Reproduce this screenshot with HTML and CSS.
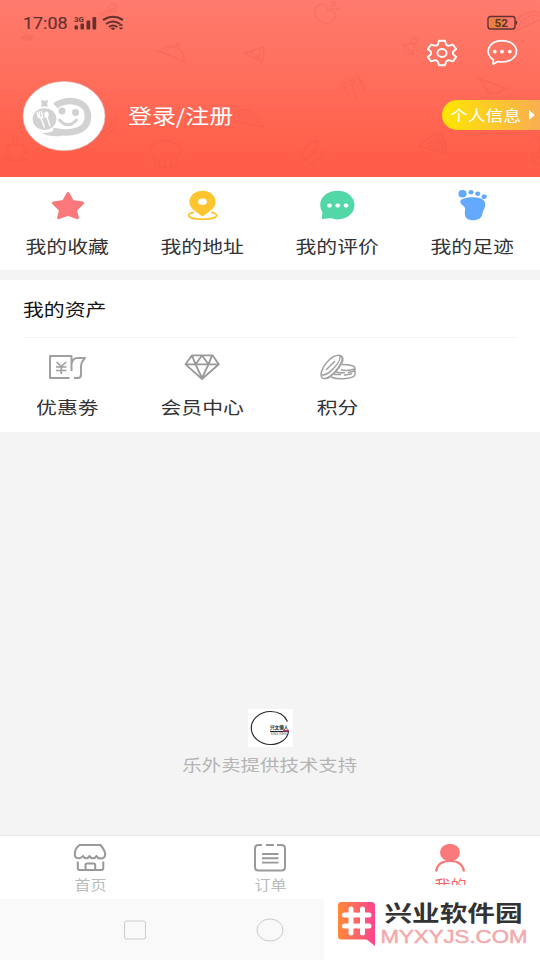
FILE: index.html
```html
<!DOCTYPE html>
<html lang="zh-CN">
<head>
<meta charset="utf-8">
<title>我的</title>
<link rel="stylesheet" href="styles.css">
</head>
<body>
<div class="app">
  <header class="header">
    <svg class="doodles" viewBox="0 0 540 177" fill="none" stroke="#d94f49" stroke-width="1.4" stroke-linecap="round" stroke-linejoin="round">
      <path d="M99 14l16-6-8 7zM108 8c2-6 9-4 9 0s-5 6-8 3"/>
      <path fill="#d94f49" d="M21 37c6 0 9-3 12-1-1 5-7 6-12 1zM23 32l4 4"/>
      <path d="M156 50l30 12M161 51c5-9 22-5 23 8M165 52c3-5 8-5 11-4"/><circle cx="178" cy="45" r="1.5"/>
      <path d="M244 53l19-6q2 8-1 15zM260 48q-1 7-1 11"/><circle cx="252" cy="53" r="1"/><circle cx="256" cy="57" r="1"/>
      <path d="M233 118c2-12 26-11 30 9l-31-6M237 117c5-7 17-4 21 6M242 116v2M248 116v2M253 120v2"/>
      <path d="M116 116c2 9-4 18-18 24M112 117q1 12-16 18M103 130v1M107 125v1"/>
      <path d="M154 156c-7-4-5-12 2-12 3-5 14-5 17 0 10-1 10 9 4 12v10q-12 3-23 0zM159 160v6M165 160v6M171 160v6"/>
      <path d="M8 145h16v8q-1 5-5 5h-6q-5 0-5-5zM24 147c4 0 4 7-1 7M4 159q12 4 23 0M14 142q-3-3 0-6M18 142q-2-3 0-5"/>
      <path d="M326 5c-6-3-11 1-11 7 0 7 5 11 11 11 8 0 13-8 7-12-3-2-6 2-6-1zM331 6c0-6 5-5 5-1zM327 9q6 0 13 0"/>
      <path d="M403 45l12-2-2 10zM413 53l-2 2M408 54h6"/><circle cx="414" cy="41" r="3"/>
      <path d="M345 88l5 9M352 86l4 12M358 77q6 5 7 14M357 77l5 9"/><ellipse cx="344" cy="85" rx="2.5" ry="3"/><path d="M349 80q1 8 4 6 2-2 1-7M352 79v4"/>
      <path d="M477 78l31 11M481 80c2 11 16 19 23 8M486 93l4 1M484 87q5 5 11 6"/>
      <path d="M513 32c0-12 10-22 27-20M513 32l26-12M518 29c2-9 10-14 20-14M523 23v1M528 20v1M533 19v1M526 26v1"/>
      <path d="M419 146l18-14q10 5 9 22zM435 133q8 6 8 20"/><circle cx="431" cy="144" r="2"/><circle cx="438" cy="141" r="2"/><circle cx="437" cy="149" r="2"/>
      <path d="M301 154l8-10 7-4 1 5-3 7-8 9zM312 152q7 3 12 0-2 8-8 7l-4 6M309 163l6 3"/>
      <circle cx="538" cy="158" r="6"/><path d="M534 138q3-2 6-1v18M532 158h8M538 153v10"/>
    </svg>
    <div class="status">
      <svg class="status-left" width="104" height="24" viewBox="0 0 104 24" fill="#64312f">
        <text x="0" y="17" class="clock" textLength="44.5" lengthAdjust="spacingAndGlyphs">17:08</text>
        <text x="51" y="9.5" class="network" textLength="10" lengthAdjust="spacingAndGlyphs">3G</text>
        <rect x="51.5" y="13.5" width="3.5" height="4" rx="1"/><rect x="57.5" y="11.5" width="3.5" height="6" rx="1"/><rect x="63.5" y="8.5" width="3.7" height="9" rx="1"/><rect x="69.5" y="5" width="3.7" height="12.500" rx="1"/>
        <g fill="none" stroke="#64312f" stroke-width="2.1"><path d="M80 8q10-6.500 20 0"/><path d="M83 12q7-5 14 0"/><path d="M86 15q4-3 8.500 0"/></g>
        <path d="M87.500 16.200q2.500-1.500 5 0l-2.500 2zM95.500 13.700l2.500-2.200 2.500 2.200zM95.500 15.500h5l-2.500 2.300z"/>
      </svg>
      <svg class="battery" width="32" height="16" viewBox="0 0 32 16">
        <rect x="4" y="3" width="14" height="10" fill="#e97e40"/>
        <rect x="2" y="1.500" width="27" height="12.500" rx="2.500" fill="none" stroke="#64312f" stroke-width="1.4"/>
        <path d="M30.300 6v3.500" stroke="#64312f" stroke-width="1.600"/>
        <text x="8.500" y="11.700" class="charge" textLength="13.500" lengthAdjust="spacingAndGlyphs">52</text>
      </svg>
    </div>
    <div class="actions">
      <svg width="32" height="28" viewBox="0 0 32 28" fill="none" stroke="#fff" stroke-width="1.900" stroke-linejoin="round">
        <path d="M13 1.800h6l1.200 4 2.300 1.100 4.500-1.200 3.200 4.400-3.200 2.700v2.500l3.200 2.600-3.200 4.500-4.500-1.200-2.300 1.100-1.200 4h-6l-1.200-4-2.300-1.100L5 22.400l-3.200-4.500L5 15.300v-2.500l-3.200-2.700L5 5.700l4.500 1.200 2.300-1.100z"/>
        <ellipse cx="16" cy="14" rx="4.600" ry="4"/>
      </svg>
      <svg width="32" height="28" viewBox="0 0 32 28" fill="none" stroke="#fff" stroke-width="1.700" stroke-linejoin="round">
        <path d="M7.300 20.700C-2 14.500 2 1.600 16 1.600c8 0 14.500 4.500 14.500 10.600S24 23 16 23c-2 0-3-.2-4.300-.5l-4.700 2.700z"/>
        <g fill="#fff" stroke="none"><circle cx="8.700" cy="12.600" r="1.900"/><circle cx="16" cy="12.600" r="1.900"/><circle cx="23.800" cy="12.600" r="1.900"/></g>
      </svg>
    </div>
    <div class="profile">
      <svg class="avatar" width="84" height="72" viewBox="0 0 84 72">
        <ellipse cx="42" cy="36" rx="41" ry="34.600" fill="#fff" stroke="#d8c9c7" stroke-width=".7"/>
        <path d="M33.500 26C41 18.500 66 18 66 36.500 66 52 48 54.500 31 51" fill="none" stroke="#d2d2d2" stroke-width="6.500"/>
        <path d="M20 53q10 0 14-4l8 4-4 3q-11 1-18-3z" fill="#d2d2d2"/>
        <g fill="#d2d2d2"><ellipse cx="22.500" cy="39" rx="11.900" ry="10.800"/><ellipse cx="40" cy="31" rx="3.500" ry="3.400"/><ellipse cx="53.500" cy="32.500" rx="3.500" ry="3.400"/><path d="M19 20q3.500 1.500 7 0-1.500 3.500 0 7-3.500-1.500-7 0 1.500-3.500 0-7z"/></g>
        <path d="M37.500 40q8.500 9.500 17 0" fill="none" stroke="#d2d2d2" stroke-width="2.800" stroke-linecap="round"/>
        <path d="M15.300 32.500l1.200 5h4.200l-1.200-6M17.500 32v5M19 38l3.300 9M25 37l2.800 8.500" fill="none" stroke="#fff" stroke-width="1.400" stroke-linecap="round"/>
        <ellipse cx="24.500" cy="34.800" rx="2.200" ry="3.300" fill="#fff"/>
      </svg>
      <span class="wide login">登录/注册</span>
      <a class="info"><span class="wide info-text">个人信息</span><svg width="6" height="10" viewBox="0 0 6 10"><path d="M0 0l5.800 5L0 10z" fill="#fff"/></svg></a>
    </div>
  </header>

  <nav class="shortcuts">
    <a class="cell">
      <svg width="36" height="32" viewBox="0 0 36 32"><path d="M18 3.500l4.400 8 10.200 1.500-7.200 7.200 2 7.500-9.400-3.300-9.400 3.300 2-7.500-7.200-7.200 10.200-1.500z" fill="#fa787a" stroke="#fa787a" stroke-width="3" stroke-linejoin="round"/></svg>
      <span class="wide">我的收藏</span>
    </a>
    <a class="cell">
      <svg width="36" height="32" viewBox="0 0 36 32"><path d="M17.500.8C9.500.8 4.400 6 4.400 12c0 5.500 4 8 13.100 14.500C26.500 20 30.600 17.500 30.600 12 30.600 6 25.500.8 17.500.8z" fill="#fec52f"/><ellipse cx="17.500" cy="11.800" rx="4.400" ry="3.300" fill="#fff"/><path d="M9 22.300C4.500 23 3.600 24 3.600 25.300c0 2.300 6 4 14 4s14-1.700 14-4c0-1.300-1-2.300-5.500-3" fill="none" stroke="#fec52f" stroke-width="1.700"/></svg>
      <span class="wide">我的地址</span>
    </a>
    <a class="cell">
      <svg width="36" height="32" viewBox="0 0 36 32"><path d="M17.500.8c9.500 0 17 6 17 14.300s-7.500 14.300-17 14.300c-3 0-5.500-.8-7-1.300l-7.500 1q-1.700 0-1.200-1.500l.7-5.100Q.2 19 .2 15C.2 6.800 8 .8 17.500.8z" fill="#52d8a7"/><g fill="#fff"><ellipse cx="9.500" cy="15.600" rx="2.400" ry="2.100"/><ellipse cx="17.700" cy="15.600" rx="2.400" ry="2.100"/><ellipse cx="26" cy="15.600" rx="2.400" ry="2.100"/></g></svg>
      <span class="wide">我的评价</span>
    </a>
    <a class="cell">
      <svg width="36" height="32" viewBox="0 0 36 32" fill="#63aaff"><path d="M7 9.300c4-2.500 13-2.600 18-1 4.500 1.500 6 4 5 8.500-.8 3-2.300 4-2.700 7.500-.5 4-5 6.300-10 6-5.500-.3-7.700-3-7.500-7.500.1-3 1-4-.6-6C6 14 3.500 11.500 7 9.300z"/><ellipse cx="7.500" cy="3.700" rx="4.100" ry="3.800"/><ellipse cx="16" cy="2.300" rx="2.500" ry="2.300"/><ellipse cx="22.700" cy="3.800" rx="2.600" ry="2.200"/><ellipse cx="29.200" cy="6.700" rx="2.600" ry="2.300"/></svg>
      <span class="wide">我的足迹</span>
    </a>
  </nav>

  <section class="assets">
    <h2><span class="wide left">我的资产</span></h2>
    <div class="asset-row">
      <a class="cell">
        <svg width="38" height="30" viewBox="0 0 38 30" fill="none" stroke="#a0a0a0" stroke-width="2" stroke-linejoin="round"><path d="M20.500 26H1V4h21.500v15M22.500 12q1-6 6-6h7.500q-4 4-4 9v7.500q0 3.500-3 3.500h-4"/><path d="M7.500 10l4.800 4.500 4.800-4.500M7 15h10.500M7 18.500h10.500M12.300 14.500v7.500" stroke-width="1.700"/></svg>
        <span class="wide">优惠劵</span>
      </a>
      <a class="cell">
        <svg width="38" height="30" viewBox="0 0 38 30" fill="none" stroke="#999" stroke-width="1.800" stroke-linejoin="round"><path d="M8 3.300h20.500l6.300 9L18 27 1.500 12.300zM1.500 12.300h33M8 3.300l3.500 9 6.500-8.800 6.500 8.800 3.500-9M11.500 12.300L18 26l6.500-13.700"/></svg>
        <span class="wide">会员中心</span>
      </a>
      <a class="cell">
        <svg width="38" height="30" viewBox="0 0 38 30" fill="none" stroke="#a2a2a2" stroke-width="1.500" stroke-linejoin="round"><path d="M2 22C3 14 13 2 21 3.500 29 6 14 25 5.500 26.500 3 27 2 25 2 22zM3 22.500c5 3 21-14 17.500-19M7 18L16 9M23 4.500c4 4-7 18-14 21.500l-4 .8"/><path d="M23 12.500c5 0 13 1 13 4v6c0 4-17 6-24 2.500M22 17.500c4 1.500 9 1 13.500-.5M17 20c3 .8 6 1 9 .8M29 20.500q6-.8 7-2.500M15 22.500h7M25 23.300l8-1.500"/></svg>
        <span class="wide">积分</span>
      </a>
    </div>
  </section>

  <main class="support">
    <svg width="45" height="38" viewBox="0 0 45 38"><path fill="#fff" d="M0 0h45v38H0z"/><path d="M39.500 12.500C36.500 6 30 2.500 22.500 2.500 12 2.500 3.300 10 3.300 19S12 35.500 22.500 35.500c9 0 17-5 18-13H22" fill="none" stroke="#292929" stroke-width="1.200"/><path d="M35 21.800h6" stroke="#c52c78" stroke-width="1.500"/><text x="22" y="20.300" class="brand" textLength="18.500" lengthAdjust="spacingAndGlyphs">兴文懒人</text><text x="22.500" y="26" class="brand-en" textLength="16" lengthAdjust="spacingAndGlyphs">XING WEN</text></svg>
    <span class="wide">乐外卖提供技术支持</span>
  </main>

  <footer class="tabs">
    <a class="tab">
      <svg width="34" height="30" viewBox="0 0 34 30" fill="none" stroke="#999" stroke-width="2" stroke-linejoin="round"><path d="M6.500 2h21q5 6 4.700 10c-.5 4-6.500 5-8.700 1-1.500 3-5.500 3-7 0-1.500 3-5 3-6.500 0-2.500 3.500-8.200 2.500-8.200-1C1.500 8 4 4 6.500 2zM4.800 18.500V25q0 2 2 2h21.500q2 0 2-2v-6.500M12.500 27v-5q0-1.600 1.600-1.600h6.500q1.600 0 1.600 1.600v5"/></svg>
      <span class="wide">首页</span>
    </a>
    <a class="tab">
      <svg width="34" height="30" viewBox="0 0 34 30" fill="none" stroke="#999" stroke-width="2"><path d="M9 2H5.500Q2 2 2 5.500V24q0 3.500 3.500 3.500h23Q32 27.500 32 24V5.500Q32 2 28.500 2H24M13 2h8"/><path d="M9 11h16.500M9 15.300h16.500M9 19.600h16.500" stroke-width="1.900"/></svg>
      <span class="wide">订单</span>
    </a>
    <a class="tab active">
      <svg width="34" height="30" viewBox="0 0 34 30"><ellipse cx="17" cy="9.500" rx="10" ry="8.700" fill="#fa7a7c"/><path d="M3 28.500C4 21 10 18 17 18s13 3 14 10.500" fill="none" stroke="#fa7a7c" stroke-width="2.100"/></svg>
      <span class="wide">我的</span>
    </a>
  </footer>
  <div class="system">
    <svg width="24" height="20" viewBox="0 0 24 20"><rect x="1.500" y="1" width="21" height="18" rx="2" fill="none" stroke="#ccc"/></svg>
    <svg width="28" height="24" viewBox="0 0 28 24"><ellipse cx="14" cy="12" rx="13" ry="11" fill="none" stroke="#ccc"/></svg>
    <span></span>
  </div>

  <svg class="sitemark" width="216" height="75" viewBox="0 0 216 75">
    <defs><linearGradient id="mark"><stop stop-color="#ff8a38"/><stop offset="1" stop-color="#fb4490"/></linearGradient></defs>
    <path fill="#fff" d="M0 0h216v75H0z"/>
    <path d="M17 17h30.500q3.500 0 3.500 3.500V61l-7-5.500q-1-1-3-1H17q-3 0-3-3V20.500Q14 17 17 17z" fill="url(#mark)"/>
    <path d="M27 24v24M38.500 24v24M20.500 30h8M35 30h10M20.500 41h10M35 41h10M27 30h5M38 41h-5" stroke="#fff" stroke-width="5" stroke-linecap="round"/>
    <text x="60.500" y="36" class="mark-cn" textLength="138" lengthAdjust="spacingAndGlyphs">兴业软件园</text>
    <text x="56.500" y="58.300" class="mark-en" textLength="147" lengthAdjust="spacingAndGlyphs">MYXYJS.COM</text>
  </svg>
</div>
</body>
</html>
```
FILE: styles.css
```css
* { box-sizing: border-box; }
body {
  margin: 0;
  font-family: "Noto Sans CJK SC", sans-serif;
  color: #333;
}
svg { display: block; flex: none; }
.app {
  position: relative;
  display: flex;
  flex-direction: column;
  width: 540px;
  height: 960px;
  overflow: hidden;
  background: #f4f4f4;
}
.wide {
  display: block;
  white-space: nowrap;
  font-size: 17.6px;
  line-height: 24px;
  transform: scaleX(1.185);
}
.left { transform-origin: left; }

.header {
  position: relative;
  height: 177px;
  flex: none;
  background: linear-gradient(#ff7c6e, #ff5f49 88%);
}
.doodles { position: absolute; inset: 0; width: 540px; height: 177px; opacity: .17; }
.status {
  position: relative;
  display: flex;
  justify-content: space-between;
  height: 38px;
  padding: 12px 22px 0 23px;
}
.battery { margin-top: 3px; }
.clock { font: 400 17px Roboto, sans-serif; stroke: #64312f; stroke-width: .2px; }
.network { font: 700 6.5px Roboto, sans-serif; }
.charge { font: 700 10px Roboto, sans-serif; fill: #5c3425; }
.actions {
  position: relative;
  display: flex;
  justify-content: flex-end;
  gap: 28px;
  height: 42px;
  padding: 1px 22px 0 0;
}
.profile {
  position: relative;
  display: flex;
  align-items: center;
  height: 72px;
  padding-left: 22px;
}
.login {
  margin-left: 22px;
  font-size: 20.2px;
  color: #fff;
  transform-origin: left;
}
.info {
  display: flex;
  align-items: center;
  justify-content: space-between;
  width: 98px;
  height: 30px;
  margin: -2px 0 0 auto;
  padding: 0 5px 0 8px;
  border-radius: 17px 0 0 17px;
  background: linear-gradient(90deg, #ffe600, #f9ae52);
}
.info-text { font-size: 15px; color: #fff; transform-origin: left; }

.shortcuts {
  display: grid;
  grid-template-columns: repeat(4, 1fr);
  height: 93px;
  padding-top: 13px;
  background: #fff;
}
.cell { display: flex; flex-direction: column; align-items: center; gap: 12px; }
.assets {
  height: 152px;
  margin-top: 10px;
  background: #fff;
}
.assets h2 {
  height: 58px;
  margin: 0 22px 0 23px;
  padding-top: 17px;
  border-bottom: 1px solid #f4f4f4;
  font-weight: 400;
  color: #111;
}
.asset-row {
  display: grid;
  grid-template-columns: repeat(4, 1fr);
  padding-top: 14px;
}
.asset-row .cell { gap: 13px; }

.support {
  display: flex;
  flex: 1;
  flex-direction: column;
  align-items: center;
  justify-content: flex-end;
  gap: 5px;
  padding-bottom: 59px;
}
.support .wide { font-size: 16.4px; color: #b4b4b4; }
.brand { font: 700 5px "Noto Sans CJK SC", sans-serif; fill: #222; }
.brand-en { font: 3px "Liberation Sans", sans-serif; fill: #555; }

.tabs {
  display: grid;
  grid-template-columns: repeat(3, 1fr);
  height: 64px;
  padding-top: 7px;
  border-top: 1px solid #eaeaea;
  background: #fff;
}
.tab { display: flex; flex-direction: column; align-items: center; }
.tab .wide { margin-top: -1px; font-size: 13.5px; color: #bbb; }
.tab.active .wide { color: #f0686a; }
.system {
  display: grid;
  grid-template-columns: repeat(3, 135px);
  align-items: center;
  justify-items: center;
  height: 61px;
  padding-left: 67px;
  background: #f9f9f9;
}
.sitemark { position: absolute; right: 0; bottom: 0; }
.mark-cn { font: 700 22px "Noto Sans CJK SC", sans-serif; fill: #333; }
.mark-en { font: 400 18.5px "Liberation Sans", sans-serif; fill: #f3aaac; stroke: #f3aaac; stroke-width: .5px; }
```
